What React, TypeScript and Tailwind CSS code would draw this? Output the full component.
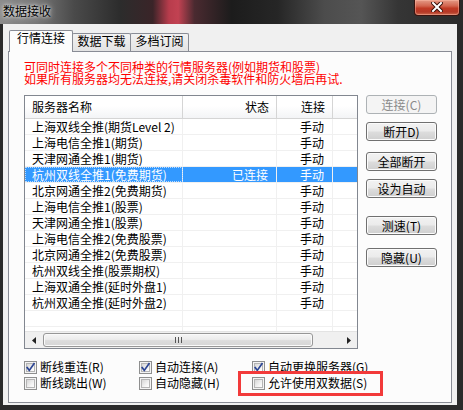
import React from "react";

type Row = { name: string; status: string; mode: string; selected?: boolean };

const rows: Row[] = [
  { name: "上海双线全推(期货Level 2)", status: "", mode: "手动" },
  { name: "上海电信全推1(期货)", status: "", mode: "手动" },
  { name: "天津网通全推1(期货)", status: "", mode: "手动" },
  { name: "杭州双线全推1(免费期货)", status: "已连接", mode: "手动", selected: true },
  { name: "北京网通全推2(免费期货)", status: "", mode: "手动" },
  { name: "上海电信全推1(股票)", status: "", mode: "手动" },
  { name: "天津网通全推1(股票)", status: "", mode: "手动" },
  { name: "上海电信全推2(免费股票)", status: "", mode: "手动" },
  { name: "北京网通全推2(免费股票)", status: "", mode: "手动" },
  { name: "杭州双线全推(股票期权)", status: "", mode: "手动" },
  { name: "上海双通全推(延时外盘1)", status: "", mode: "手动" },
  { name: "杭州双通全推(延时外盘2)", status: "", mode: "手动" },
  { name: "", status: "", mode: "" },
  { name: "", status: "", mode: "" },
];

function Btn({ children, disabled, className }: { children: React.ReactNode; disabled?: boolean; className?: string }) {
  return (
    <div
      className={
        "h-[19px] w-[71px] rounded-[3px] border flex items-center justify-center " +
        (disabled
          ? "border-[#adb2b5] bg-[#f4f4f4] text-[#8a8a8a] "
          : "border-[#707070] bg-[linear-gradient(#f2f2f2_0%,#ebebeb_48%,#dddddd_52%,#cfcfcf_100%)] shadow-[inset_0_0_0_1px_#fbfbfb] text-black ") +
        (className ?? "")
      }
    >
      {children}
    </div>
  );
}

function Check({ checked, label }: { checked?: boolean; label: string }) {
  return (
    <div className="flex items-center h-[16px]">
      <div className="relative w-[13px] h-[13px] border border-[#8e8f8f] bg-[#f4f4f4] p-[1px] mr-[3px] shrink-0">
        <div className="w-full h-full border border-[#b5b5b5] bg-[linear-gradient(135deg,#d6d6d6_0%,#f2f2f2_60%,#ffffff_100%)]" />
        {checked && (
          <svg className="absolute left-0 top-0" width="11" height="11" viewBox="0 0 11 11">
            <path d="M2.2 5.6 L4.3 8.4 L9 1.8" fill="none" stroke="#2b4594" strokeWidth="1.7" strokeLinecap="square" />
          </svg>
        )}
      </div>
      <span className="whitespace-nowrap">{label}</span>
    </div>
  );
}

export default function App() {
  return (
    <div className="relative w-[463px] h-[410px] overflow-hidden bg-[#2a2a2a] flex flex-col text-[12px] leading-[12px] text-black font-['Noto_Sans_CJK_SC','Noto_Sans',sans-serif]">
      {/* Title bar */}
      <div className="h-[24px] shrink-0 flex items-start justify-between bg-[linear-gradient(90deg,#8c8c8c_0%,#767676_8%,#4a4a4a_16%,#2c2c2c_26%,#3a2428_33%,#b83c4c_36.5%,#c24252_38.5%,#4a2a30_42%,#1c1c1c_50%,#262626_60%,#4c4c4c_70%,#555555_78%,#353535_86%,#2a2a2a_100%)]">
        <span className="ml-[3px] mt-[4px] leading-[13px] text-black [text-shadow:0_0_6px_rgba(255,255,255,0.9),0_0_3px_rgba(255,255,255,0.8)]">数据接收</span>
        <div className="mr-[3px] w-[46px] h-[16px] rounded-b-[4px] border border-t-0 border-[#3a1410] bg-[linear-gradient(#e49a86_0%,#d2644e_40%,#c03a24_55%,#b53826_80%,#cc6a4e_100%)] shadow-[inset_0_0_0_1px_rgba(255,190,170,0.45)] flex items-start justify-center pt-[2px]">
          <svg width="12" height="10" viewBox="0 0 12 10">
            <path d="M2 1 L10 9 M10 1 L2 9" stroke="#3a1008" strokeWidth="4" strokeLinecap="square" />
            <path d="M2 1 L10 9 M10 1 L2 9" stroke="#ffffff" strokeWidth="2" strokeLinecap="square" />
          </svg>
        </div>
      </div>

      {/* Client area */}
      <div className="flex-1 flex flex-col ml-[3px] mr-[6px] mb-[5px] bg-[#f0f0f0] pt-[6px] pl-[5px] pr-[5px] pb-[2px]">
        {/* Tabs */}
        <div className="h-[21px] flex items-end pl-[1px]">
          <div className="relative z-10 -mb-px w-[64px] h-[22px] border border-b-0 border-[#898c95] rounded-t-[2px] bg-[#fcfcfc] flex justify-center pt-[1px]">
            <span className="leading-[12px]">行情连接</span>
          </div>
          <div className="-ml-px w-[59px] h-[18px] border border-b-0 border-[#898c95] rounded-t-[2px] bg-[linear-gradient(#f2f2f2,#e3e3e3)] flex justify-center pt-[1px]">
            <span>数据下载</span>
          </div>
          <div className="-ml-px w-[59px] h-[18px] border border-b-0 border-[#898c95] rounded-t-[2px] bg-[linear-gradient(#f2f2f2,#e3e3e3)] flex justify-center pt-[1px]">
            <span>多档订阅</span>
          </div>
        </div>

        {/* Panel */}
        <div className="flex-1 border border-[#898c95] bg-[#fcfcfc] pl-[15px] pt-[9px]">
          <div className="text-[#ff0000]">
            <div className="whitespace-nowrap">可同时连接多个不同种类的行情服务器(例如期货和股票)</div>
            <div className="whitespace-nowrap">如果所有服务器均无法连接,请关闭杀毒软件和防火墙后再试.</div>
          </div>

          <div className="mt-[10px] flex gap-[8px]">
            {/* List */}
            <div className="w-[334px] h-[254px] border border-[#828790] bg-white flex flex-col overflow-hidden">
              <div className="h-[23px] shrink-0 flex border-b border-[#d5d5d5] bg-[linear-gradient(#ffffff_0%,#ffffff_45%,#f3f4f6_100%)]">
                <div className="w-[158px] border-r border-[#d5d5d5] flex items-center pl-[7px]">服务器名称</div>
                <div className="w-[94px] border-r border-[#d5d5d5] flex items-center justify-end pr-[7px]">状态</div>
                <div className="w-[56px] border-r border-[#d5d5d5] flex items-center justify-end pr-[7px]">连接</div>
                <div className="flex-1" />
              </div>
              <div className="flex-1 overflow-hidden">
                {rows.map((r, i) => (
                  <div
                    key={i}
                    className={"h-[16px] flex border-b border-[#f0f0f0] " + (r.selected ? "bg-[#3399ff] text-white" : "")}
                  >
                    <div className={"w-[158px] border-r border-[#f0f0f0] flex items-center pl-[7px] whitespace-nowrap overflow-hidden " + (r.selected ? "outline outline-1 outline-dotted outline-[#bcdcff] -outline-offset-1" : "")}>
                      {r.name}
                    </div>
                    <div className="w-[94px] border-r border-[#f0f0f0] flex items-center justify-end pr-[8px]">{r.status}</div>
                    <div className="w-[56px] border-r border-[#f0f0f0] flex items-center justify-end pr-[8px]">{r.mode}</div>
                    <div className="flex-1" />
                  </div>
                ))}
              </div>
              {/* Horizontal scrollbar */}
              <div className="h-[17px] shrink-0 flex items-stretch bg-[#f0f0f0] border-t border-[#e3e3e3]">
                <div className="w-[17px] flex items-center justify-center">
                  <svg width="4" height="7" viewBox="0 0 4 7">
                    <path d="M4 0 L0 3.5 L4 7 Z" fill="#222" />
                  </svg>
                </div>
                <div className="ml-[1px] my-[1px] w-[270px] rounded-[3px] border border-[#979797] bg-[linear-gradient(#f6f6f6_0%,#ececec_45%,#dcdcdc_55%,#d6d6d6_100%)] shadow-[inset_0_0_0_1px_#fafafa] flex items-center justify-center gap-[2px]">
                  <div className="w-[1px] h-[6px] bg-[#555]" />
                  <div className="w-[1px] h-[6px] bg-[#555]" />
                  <div className="w-[1px] h-[6px] bg-[#555]" />
                </div>
                <div className="flex-1" />
                <div className="w-[17px] flex items-center justify-center">
                  <svg width="4" height="7" viewBox="0 0 4 7">
                    <path d="M0 0 L4 3.5 L0 7 Z" fill="#222" />
                  </svg>
                </div>
              </div>
            </div>

            {/* Buttons */}
            <div className="flex flex-col">
              <Btn disabled>连接(C)</Btn>
              <Btn className="mt-[8px]">断开D)</Btn>
              <Btn className="mt-[11px]">全部断开</Btn>
              <Btn className="mt-[8px]">设为自动</Btn>
              <Btn className="mt-[18px]">测速(T)</Btn>
              <Btn className="mt-[13px]">隐藏(U)</Btn>
            </div>
          </div>

          {/* Checkboxes */}
          <div className="mt-[10px] grid grid-cols-[115px_113px_1fr]">
            <Check checked label="断线重连(R)" />
            <Check checked label="自动连接(A)" />
            <Check checked label="自动更换服务器(G)" />
            <Check label="断线跳出(W)" />
            <Check label="自动隐藏(H)" />
            <Check label="允许使用双数据(S)" />
          </div>
        </div>
      </div>

      {/* Red annotation rectangle */}
      <div className="absolute left-[238px] top-[371px] w-[145px] h-[25px] border-[3px] border-[#f23a3a] pointer-events-none" />
    </div>
  );
}
